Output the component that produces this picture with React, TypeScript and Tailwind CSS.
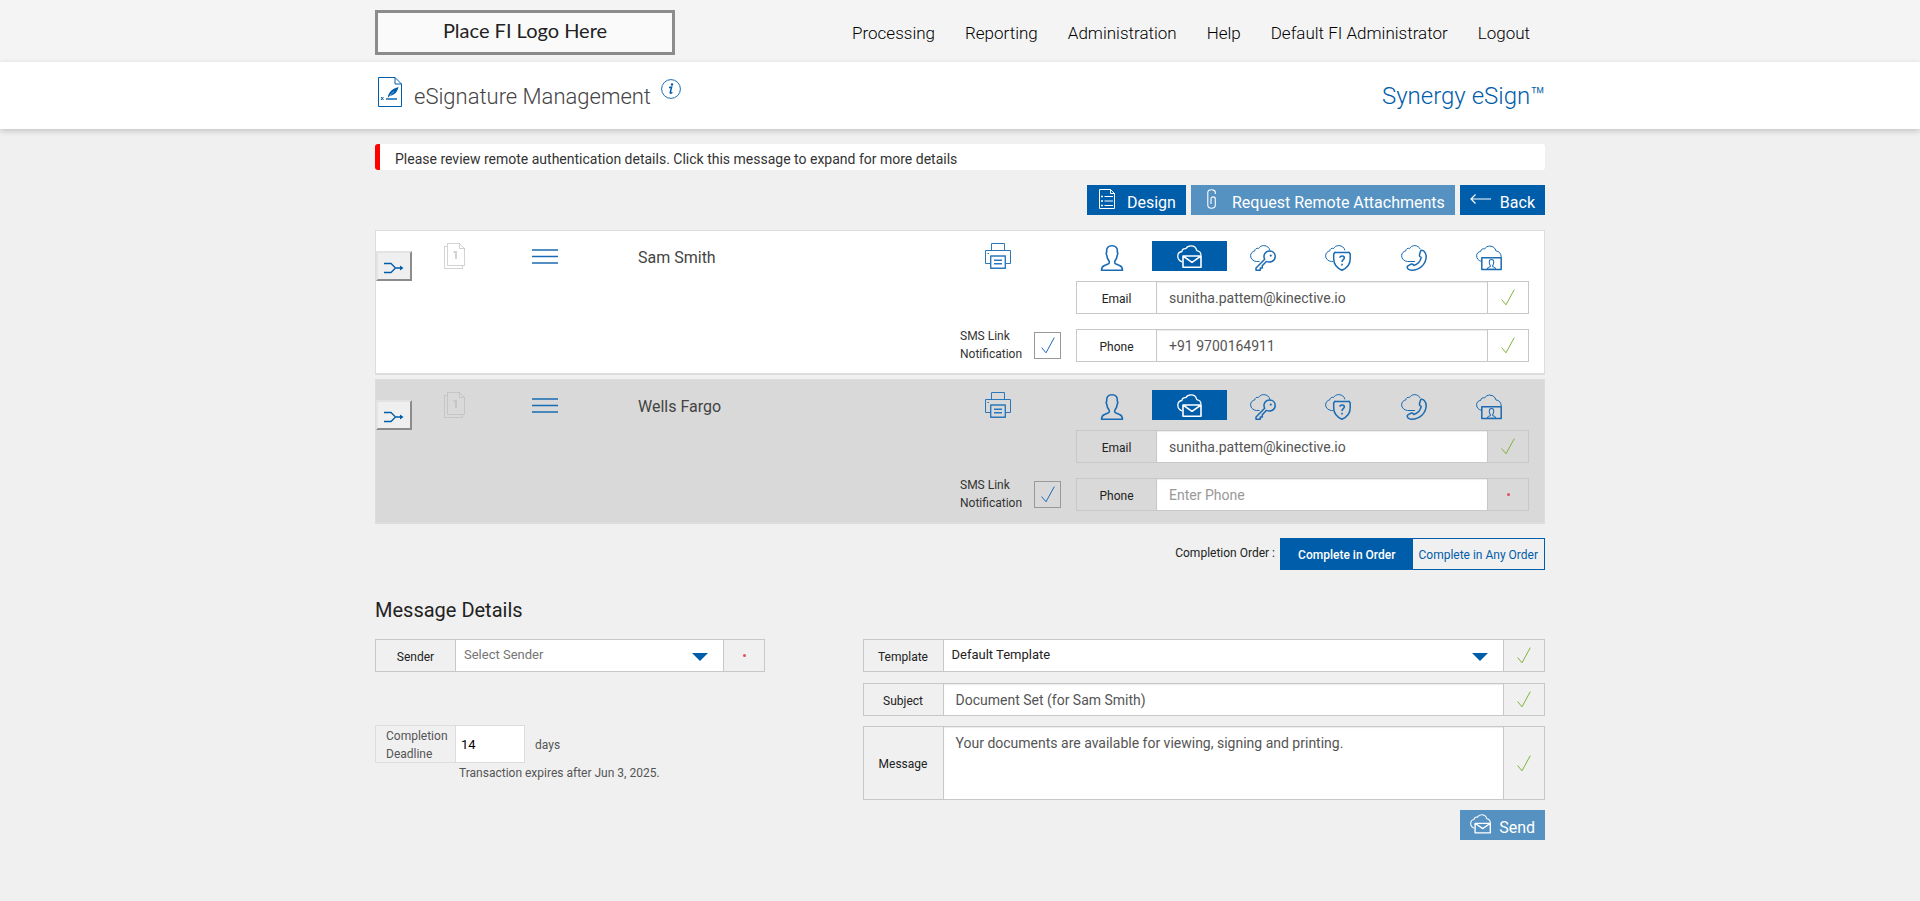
import React, { useState } from 'react';

interface IconProps {
  className?: string;
}

interface Signer {
  id: string;
  name: string;
  email: string;
  phone: string;
  current: boolean;
}

const signers: Signer[] = [
  { id: 'sam', name: 'Sam Smith', email: 'sunitha.pattem@kinective.io', phone: '+91 9700164911', current: true },
  { id: 'wells', name: 'Wells Fargo', email: 'sunitha.pattem@kinective.io', phone: '', current: false },
];

const menu = ['Processing', 'Reporting', 'Administration', 'Help', 'Default FI Administrator', 'Logout'];

const Icon: React.FC<IconProps & { children: React.ReactNode }> = ({ className = 'h-[26px] w-[26px]', children }) => (
  <svg
    viewBox="0 0 26 26"
    className={className}
    fill="none"
    stroke="currentColor"
    strokeWidth="1.3"
    strokeLinejoin="round"
    aria-hidden="true"
  >
    {children}
  </svg>
);

const Cloud = ({ d }: { d: string }) => <path d={d} strokeWidth="1" />;

const cloudPath =
  'M9.5 16.5H6.5C3.2 16.2 .6 13.8 .6 10.9C.6 8.2 2.5 6.3 4.8 5.9C4.8 3.8 6.8 2.8 8.6 3.5C9.6 1.6 11.6 .6 13.8 .6C17 .6 19.4 2.7 19.9 5.4';

const personPath =
  'M2.5 25.2H23.5C23.5 22.5 22.8 21.3 20.5 20.4L17 19C15.5 18.3 15.4 17 16 15.8C17.6 14 18 12.3 18.2 10.3C19 9 18.8 7.8 18.3 7C18.8 3 17 .8 13 .8C9 .8 7.2 3 7.7 7C7.2 7.8 7 9 7.8 10.3C8 12.3 8.4 14 10 15.8C10.6 17 10.5 18.3 9 19L5.5 20.4C3.2 21.3 2.5 22.5 2.5 25.2Z';

const PersonIcon = () => (
  <Icon>
    <path strokeWidth="1.6" d={personPath} />
  </Icon>
);

const MailIcon: React.FC<IconProps> = ({ className }) => (
  <Icon className={className}>
    <path d="M5 16.8C2.6 16 .8 14 .8 11.3C.8 8.6 2.6 6.8 4.9 6.5C5 4.4 6.9 3.2 8.8 3.7C9.8 1.8 11.8 .8 13.9 .8C17 .8 19.3 2.9 19.8 5.6C22.3 6 24 7.8 24 10.5" />
    <path strokeWidth="1.6" d="M6 11H24V22.3H6ZM6 11L15 17.3L24 11" />
  </Icon>
);

const KeyIcon = () => (
  <Icon>
    <Cloud d={cloudPath} />
    <path
      strokeWidth="1.5"
      d="M14.7 14.3L6 23V25.2H10.3V23H12.3V20.7L16.3 16.4C20.5 18.4 25.2 15.7 25.2 11.5C25.2 8.2 22.7 6 19.6 6C15.3 6 12.7 10.2 14.7 14.3Z"
    />
    <circle cx="20.8" cy="10.6" r=".8" fill="currentColor" strokeWidth=".6" />
  </Icon>
);

const ShieldIcon = () => (
  <Icon>
    <Cloud d="M8 16.5H6.5C3.2 16.2 .6 13.8 .6 10.9C.6 8.2 2.5 6.3 4.8 5.9C4.8 3.8 6.8 2.8 8.6 3.5C9.6 1.6 11.6 .6 13.8 .6C17 .6 19.4 2.7 19.9 5.4" />
    <path strokeWidth="1.5" d="M10 7.2C12 7.6 22 7.6 24 7.2L25.2 9V14C25.2 19.5 21.5 23.2 17 25.3C12.4 23.2 8.7 19.5 8.7 14V9Z" />
    <path strokeWidth="1.6" d="M15 12.7C15 10.4 19.4 10.5 19.3 13C19.2 14.7 17 14.6 17 17M17 18.8V20.4" />
  </Icon>
);

const PhoneIcon = () => (
  <Icon>
    <Cloud d="M8 16.5H6.5C3.2 16.2 .6 13.8 .6 10.9C.6 8.2 2.5 6.3 4.8 5.9C4.8 3.8 6.8 2.8 8.6 3.5C9.6 1.6 11.6 .6 13.8 .6C16 .6 18.3 2 19.3 4.3M8 16.5H14" />
    <path
      strokeWidth="1.5"
      d="M19.8 5.6C21.8 4.2 25.2 7.5 25.2 11.8C25 18.5 19.5 25.2 10.5 25.2C7.5 25.2 5.8 23.2 6.3 21.3L9.8 19.2C11 18.7 12.4 19.5 12.8 20.5C16.5 19.3 19.6 15.8 20.2 12.4C19 12 18.2 11 18.5 9.5Z"
    />
  </Icon>
);

const BadgeIcon = () => (
  <Icon>
    <Cloud d="M5.8 16.4C2.9 16 .6 13.8 .6 10.9C.6 8.2 2.5 6.6 4.8 6.3C4.8 4.2 6.8 3.3 8.6 4C9.6 2.1 11.6 1.1 13.8 1.1C17 1.1 19.4 3.2 19.9 5.9C23 6.2 25.2 8.3 25.2 12" />
    <path strokeWidth="1.5" d="M5.8 12.7H25.2V24.6H5.8Z" />
    <path transform="translate(10.3 14.2) scale(.4)" strokeWidth="2.6" d={personPath} />
  </Icon>
);

const PrinterIcon = () => (
  <Icon>
    <path strokeWidth="1" d="M6.5 7.5V.5H19.5V7.5M5.5 20.5H.5V7.5H25.5V20.5H20.5" />
    <path strokeWidth="1.4" d="M5.7 13H20.3V25.3H5.7ZM9 17.2H17M9 20.8H17" />
    <path strokeWidth="1" d="M2.5 10.5H4" />
  </Icon>
);

const PagesIcon = () => (
  <svg viewBox="0 0 22 26" className="h-[26px] w-[22px]" fill="none" stroke="#000" strokeOpacity=".17" aria-hidden="true">
    <path d="M3 3.5H.5V25.5H18.5V22.5" />
    <path d="M3.5 .5H15.5L20.5 5.5V22.5H3.5ZM15.5 .5V5.5H20.5" />
    <path strokeWidth="2" d="M9.5 9H12V16" />
  </svg>
);

const MergeIcon = () => (
  <svg viewBox="0 0 20 12" className="h-3 w-5" fill="none" stroke="#005da9" strokeWidth="1.3" aria-hidden="true">
    <path d="M0 1.5H7L11.5 6L7 10.5H0M11 6H18" />
    <path d="M16 3.5L19.5 6L16 8.5Z" fill="#005da9" stroke="none" />
  </svg>
);

const Check: React.FC<IconProps> = ({ className = 'text-[#7eb33c]' }) => (
  <svg viewBox="0 0 14 17" className={`h-[17px] w-[14px] ${className}`} fill="none" stroke="currentColor" strokeWidth="1" aria-hidden="true">
    <path d="M.6 10.5L5 15.8L13.3 .6" />
  </svg>
);

const Status = ({ ok }: { ok: boolean }) =>
  ok ? <Check /> : <span className="h-[3px] w-[3px] rounded-full bg-[#e0505a]" />;

const methods = [
  { label: 'In person', icon: PersonIcon },
  { label: 'Email', icon: MailIcon },
  { label: 'Passcode', icon: KeyIcon },
  { label: 'Security questions', icon: ShieldIcon },
  { label: 'Phone call', icon: PhoneIcon },
  { label: 'Identity', icon: BadgeIcon },
];

interface FieldProps {
  id: string;
  label: string;
  ok: boolean;
  className?: string;
  children: React.ReactNode;
}

const Field: React.FC<FieldProps> = ({ id, label, ok, className = '', children }) => (
  <div className={`flex min-h-[33px] border border-[#c8c8c8] ${className}`}>
    <label htmlFor={id} className="flex w-[79px] shrink-0 items-center justify-center pt-0.5 text-[12px] text-[#222]">
      {label}
    </label>
    <div className="relative flex min-w-0 flex-1 border-x border-[#c8c8c8] bg-white">{children}</div>
    <div className="flex w-10 shrink-0 items-center justify-center">
      <Status ok={ok} />
    </div>
  </div>
);

const controlStyle =
  'w-full min-w-0 px-3 text-[14px] text-[#555] shadow-[inset_0_1px_1px_rgba(0,0,0,0.08)] outline-none placeholder:text-[#999]';
const inputStyle = `${controlStyle} pt-0.5`;

const Select = ({ id, value, muted }: { id: string; value: string; muted?: boolean }) => (
  <>
    <select
      id={id}
      className={`w-full appearance-none px-2 pb-px text-[13px] outline-none ${muted ? 'text-[#757575]' : 'text-[#222]'}`}
    >
      <option>{value}</option>
    </select>
    <svg viewBox="0 0 16 8" className="pointer-events-none absolute top-[13px] right-[15px] h-2 w-4" aria-hidden="true">
      <path d="M0 0H16L8 8Z" fill="#005da9" />
    </svg>
  </>
);

const SignerRow = ({ signer }: { signer: Signer }) => {
  const [method, setMethod] = useState('Email');

  return (
    <section
      className={`flex border border-b-2 border-[#ddd] ${signer.current ? 'bg-white' : 'bg-[#d9d9d9]'}`}
    >
      <button
        aria-label="Merge signer"
        className="mt-5 flex h-[30px] w-9 shrink-0 items-center justify-center border-2 border-t-[#e3e3e3] border-r-[#8c8c8c] border-b-[#8c8c8c] border-l-[#e3e3e3] bg-[#efefef] pt-1"
      >
        <MergeIcon />
      </button>
      <div className={`mt-3 ml-8 w-[22px] shrink-0 ${signer.current ? '' : 'opacity-50'}`}>
        <PagesIcon />
      </div>
      <button aria-label={`Reorder ${signer.name}`} className="mt-[18px] ml-[66px] h-[15px] w-[26px] shrink-0">
        <svg viewBox="0 0 26 15" className="h-[15px] w-[26px]" stroke="#1a6bb3" strokeWidth="1.6" aria-hidden="true">
          <path d="M0 1H26M0 7.5H26M0 14H26" />
        </svg>
      </button>
      <h2 className="mt-[15px] ml-20 min-w-0 flex-1 text-[16px] leading-6 text-[#444]">{signer.name}</h2>

      <div className="flex w-[101px] shrink-0 flex-col justify-between pt-3 pb-2.5">
        <button aria-label="Print" className="ml-[25px] w-[26px] text-[#2a78bb]">
          <PrinterIcon />
        </button>
        <label className="flex items-center justify-between text-[12px] leading-[18px] text-[#333]">
          <span>
            SMS Link
            <br />
            Notification
          </span>
          <span className="relative flex">
            <input
              type="checkbox"
              defaultChecked
              className="peer h-[27px] w-[27px] appearance-none border border-[#999]"
            />
            <span className="pointer-events-none absolute inset-0 hidden items-center justify-center peer-checked:flex">
              <Check className="text-[#1a6bb3]" />
            </span>
          </span>
        </label>
      </div>

      <div className="mr-[15px] ml-[15px] w-[453px] shrink-0 pt-2.5 pb-[11px]">
        <div className="grid grid-cols-6">
          {methods.map(({ label, icon: MethodIcon }) => (
            <button
              key={label}
              aria-label={label}
              onClick={() => setMethod(label)}
              className={`flex h-[30px] items-start justify-center pt-1 ${
                method === label ? 'bg-[#005da9] pl-0.5 text-white' : 'pr-1 text-[#1a6bb3]'
              }`}
            >
              <MethodIcon />
            </button>
          ))}
        </div>
        <Field id={`${signer.id}-email`} label="Email" ok className="mt-2.5">
          <input id={`${signer.id}-email`} type="email" defaultValue={signer.email} className={inputStyle} />
        </Field>
        <Field id={`${signer.id}-phone`} label="Phone" ok={signer.phone !== ''} className="mt-[15px]">
          <input
            id={`${signer.id}-phone`}
            type="tel"
            placeholder="Enter Phone"
            defaultValue={signer.phone}
            className={inputStyle}
          />
        </Field>
      </div>
    </section>
  );
};

const Header = () => (
  <header>
    <div className="bg-[#f4f4f4]">
      <div className="mx-auto flex h-[62px] max-w-[1170px] items-center justify-between pt-0.5">
        <div className="flex h-[45px] w-[300px] items-center justify-center border-3 border-[#8c8c8c] bg-[#fafafa] pb-1 font-[Lato] text-[20px] text-[#222]">
          Place FI Logo Here
        </div>
        <nav className="flex gap-[30px] pt-1 pr-[15px] text-[17px] font-light text-black">
          {menu.map((item) => (
            <a key={item} href="#">
              {item}
            </a>
          ))}
        </nav>
      </div>
    </div>
    <div className="bg-white shadow-[0_2px_6px_rgba(0,0,0,0.2)]">
      <div className="mx-auto flex h-[67px] max-w-[1170px] items-center">
        <svg viewBox="0 0 24 30" className="mr-3 mb-2 ml-[3px] h-[30px] w-6" fill="none" stroke="#005da9" aria-hidden="true">
          <path d="M.5 .5H17L23.5 7V29.5H.5ZM17 .5V7H23.5" />
          <path d="M8 22H19" strokeWidth="1.4" />
          <path d="M3 20L5.5 23M5.5 20L3 23" />
          <path d="M9.8 20.5C10.5 15 14.5 11.5 20.5 10C19.5 15 16.5 18 12 18.8L9.8 20.8Z" fill="#005da9" stroke="none" />
          <path d="M11.5 18.8L16 14.5" stroke="#fff" strokeWidth=".5" />
        </svg>
        <h1 className="pt-0.5 text-[22px] font-light text-[#444]">eSignature Management</h1>
        <button aria-label="Information" className="mb-3.5 ml-2.5">
          <svg viewBox="0 0 20 20" className="h-5 w-5" fill="none" stroke="#005da9" aria-hidden="true">
            <circle cx="10" cy="10" r="9.4" strokeWidth=".9" />
            <path d="M8 8.6L10.6 8.2L9.2 13.6Q9.2 14.8 11.4 13.4" strokeWidth="1.5" />
            <circle cx="11" cy="5.5" r="1.2" fill="#005da9" stroke="none" />
          </svg>
        </button>
        <div className="ml-auto text-[24px] font-light text-[#005da9]">Synergy eSign™</div>
      </div>
    </div>
  </header>
);

const actionStyle = 'flex h-[30px] items-center pr-2.5 text-[16px] text-white';

const App: React.FC = () => {
  const [inOrder, setInOrder] = useState(true);

  return (
    <div className="min-h-screen bg-[#f0f0f0] font-[Roboto,sans-serif] text-[#222]">
      <Header />

      <main className="mx-auto max-w-[1170px] pt-[15px]">
        <button className="block h-[26px] w-full rounded-[3px] border-l-5 border-[#f00] bg-white pt-1 pl-[15px] text-left text-[14px] leading-[22px] text-[#333]">
          Please review remote authentication details. Click this message to expand for more details
        </button>

        <div className="mt-[15px] flex justify-end gap-[5px]">
          <button className={`${actionStyle} bg-[#005da9] pl-3`}>
            <svg viewBox="0 0 16 20" className="mr-3 mb-0.5 h-5 w-4" fill="none" stroke="currentColor" aria-hidden="true">
              <path d="M.5 .5H11.5L15.5 4.5V19.5H.5ZM11.5 .5V4.5H15.5M5.5 7.5H14M5.5 12H14M5.5 16.5H14" />
              <path d="M2 7.5H4M2 12H4M2 16.5H4" strokeWidth="1.6" />
            </svg>
            <span className="pt-1.5">Design</span>
          </button>
          <button className={`${actionStyle} bg-[#5591c1] pl-4`}>
            <svg viewBox="0 0 9 20" className="mr-4 mb-0.5 h-5 w-[9px]" fill="none" stroke="currentColor" strokeWidth="1.1" aria-hidden="true">
              <path d="M8.3 5V3.5C8.3 -.2 .8 -.2 .8 3.5V16C.8 20.3 8.3 20.3 8.3 16V10C8.3 7.2 4 7.2 4 10V15" />
            </svg>
            <span className="pt-1.5">Request Remote Attachments</span>
          </button>
          <button className={`${actionStyle} bg-[#005da9] pl-2.5`}>
            <svg viewBox="0 0 21 10" className="mr-[9px] mb-0.5 h-2.5 w-[21px]" fill="none" stroke="currentColor" strokeWidth="1.2" aria-hidden="true">
              <path d="M21 5H1M5.5 .5L1 5L5.5 9.5" />
            </svg>
            <span className="pt-1.5">Back</span>
          </button>
        </div>

        <div className="mt-[15px] flex flex-col gap-1">
          {signers.map((signer) => (
            <SignerRow key={signer.id} signer={signer} />
          ))}
        </div>

        <div className="mt-3.5 flex justify-end text-[12px]">
          <span className="mr-[5px] pt-1.5">Completion Order :</span>
          <div className="flex h-8 w-[265px] border border-[#005da9]">
            <button
              onClick={() => setInOrder(true)}
              className={`flex-1 pt-0.5 font-medium ${inOrder ? 'bg-[#005da9] text-white' : 'text-[#005da9]'}`}
            >
              Complete in Order
            </button>
            <button
              onClick={() => setInOrder(false)}
              className={`flex-1 pt-0.5 ${inOrder ? 'text-[#005da9]' : 'bg-[#005da9] text-white'}`}
            >
              Complete in Any Order
            </button>
          </div>
        </div>

        <h2 className="mt-[26px] text-[20px] leading-7">Message Details</h2>

        <form className="mt-[15px] flex justify-between" onSubmit={(e) => e.preventDefault()}>
          <div className="w-1/3">
            <Field id="sender" label="Sender" ok={false}>
              <Select id="sender" value="Select Sender" muted />
            </Field>
            <div className="mt-[53px] flex items-center text-[12px] text-[#555]">
              <div className="flex h-[38px] w-[150px] border border-[#ddd]">
                <label htmlFor="deadline" className="w-[79px] pt-px pl-2.5 leading-[18px]">
                  Completion Deadline
                </label>
                <input
                  id="deadline"
                  defaultValue="14"
                  className="min-w-0 flex-1 border-l border-[#ddd] bg-white px-[5px] pt-0.5 text-[13px] text-black outline-none"
                />
              </div>
              <span className="ml-2.5 pt-0.5">days</span>
            </div>
            <p className="pt-px pl-[84px] text-[12px] leading-[18px] text-[#555]">Transaction expires after Jun 3, 2025.</p>
          </div>

          <div className="flex w-7/12 flex-col">
            <Field id="template" label="Template" ok>
              <Select id="template" value="Default Template" />
            </Field>
            <Field id="subject" label="Subject" ok className="mt-[11px]">
              <input id="subject" defaultValue="Document Set (for Sam Smith)" className={inputStyle} />
            </Field>
            <Field id="message" label="Message" ok className="mt-2.5">
              <textarea
                id="message"
                defaultValue="Your documents are available for viewing, signing and printing."
                className={`${controlStyle} h-[72px] resize-none py-1.5`}
              />
            </Field>
            <button className={`${actionStyle} mt-2.5 self-end bg-[#5591c1] pl-2.5`}>
              <MailIcon className="mr-[7px] h-[22px] w-[22px]" />
              <span className="pt-1.5">Send</span>
            </button>
          </div>
        </form>
      </main>
    </div>
  );
};

export default App;
